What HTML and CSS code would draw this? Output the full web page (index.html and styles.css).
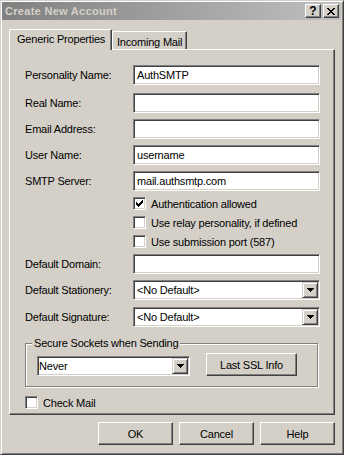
FILE: index.html
```html
<!DOCTYPE html>
<html>
<head>
<meta charset="utf-8">
<link rel="stylesheet" href="styles.css">
</head>
<body>
<div class="window">
  <div class="titlebar">
    <span class="title">Create New Account</span>
    <div class="tbtns">
      <span class="tbtn help">?</span>
      <span class="tbtn close"><svg width="8" height="7" viewBox="0 0 8 7" shape-rendering="crispEdges"><path d="M0 0h2v1h-2zM6 0h2v1h-2zM1 1h2v1h-2zM5 1h2v1h-2zM2 2h4v1h-4zM3 3h2v1h-2zM2 4h4v1h-4zM1 5h2v1h-2zM5 5h2v1h-2zM0 6h2v1h-2zM6 6h2v1h-2z" fill="#000"/></svg></span>
    </div>
  </div>
  <div class="client">
    <div class="tabs">
      <div class="tab active">Generic Properties</div>
      <div class="tab">Incoming Mail</div>
    </div>
    <div class="panel">
      <div class="form">
        <div class="row first"><span class="label">Personality Name:</span><div class="edit">AuthSMTP</div></div>
        <div class="row"><span class="label">Real Name:</span><div class="edit"></div></div>
        <div class="row"><span class="label">Email Address:</span><div class="edit"></div></div>
        <div class="row"><span class="label">User Name:</span><div class="edit">username</div></div>
        <div class="row"><span class="label">SMTP Server:</span><div class="edit">mail.authsmtp.com</div></div>
        <div class="check-row indent"><span class="cb"><svg width="11" height="11" viewBox="0 0 11 11" shape-rendering="crispEdges"><path d="M8 2h1v1h-1zM7 3h2v1h-2zM2 4h1v1h-1zM6 4h3v1h-3zM2 5h2v1h-2zM5 5h3v1h-3zM2 6h5v1h-5zM3 7h3v1h-3zM4 8h1v1h-1z" fill="#000"/></svg></span>Authentication allowed</div>
        <div class="check-row indent"><span class="cb"></span>Use relay personality, if defined</div>
        <div class="check-row indent"><span class="cb"></span>Use submission port (587)</div>
        <div class="row"><span class="label">Default Domain:</span><div class="edit"></div></div>
        <div class="row stat"><span class="label">Default Stationery:</span><div class="edit combo">&lt;No Default&gt;<span class="drop"><svg width="7" height="4" viewBox="0 0 7 4" shape-rendering="crispEdges"><path d="M0 0h7v1h-7zM1 1h5v1h-5zM2 2h3v1h-3zM3 3h1v1h-1z" fill="#000"/></svg></span></div></div>
        <div class="row"><span class="label">Default Signature:</span><div class="edit combo">&lt;No Default&gt;<span class="drop"><svg width="7" height="4" viewBox="0 0 7 4" shape-rendering="crispEdges"><path d="M0 0h7v1h-7zM1 1h5v1h-5zM2 2h3v1h-3zM3 3h1v1h-1z" fill="#000"/></svg></span></div></div>
      </div>
      <div class="group">
        <span class="group-title">Secure Sockets when Sending</span>
        <div class="group-row">
          <div class="edit combo never">Never<span class="drop"><svg width="7" height="4" viewBox="0 0 7 4" shape-rendering="crispEdges"><path d="M0 0h7v1h-7zM1 1h5v1h-5zM2 2h3v1h-3zM3 3h1v1h-1z" fill="#000"/></svg></span></div>
          <div class="btn ssl">Last SSL Info</div>
        </div>
      </div>
      <div class="check-row checkmail"><span class="cb"></span>Check Mail</div>
    </div>
    <div class="buttons">
      <div class="btn">OK</div>
      <div class="btn">Cancel</div>
      <div class="btn">Help</div>
    </div>
  </div>
</div>
</body>
</html>
```
FILE: styles.css
```css
body {
  margin: 0;
  font: 11px "Liberation Sans", Arial, sans-serif;
  letter-spacing: -0.2px;
  color: #000;
  background: #d4d0c8;
}
.window {
  width: 344px;
  height: 455px;
  box-sizing: border-box;
  border: 1px solid;
  border-color: #d4d0c8 #404040 #404040 #d4d0c8;
  box-shadow: inset 1px 1px #fff, inset -1px -1px #808080;
  padding: 1px;
  display: flex;
  flex-direction: column;
  background: #d4d0c8;
}
.titlebar {
  height: 18px;
  margin-right: 1px;
  background: linear-gradient(to right, #808080, #c0c0c0);
  display: flex;
  align-items: center;
  justify-content: space-between;
}
.title {
  font-weight: bold;
  color: #d4d0c8;
  padding-left: 3px;
  line-height: 18px;
  letter-spacing: 0.3px;
}
.tbtns {
  display: flex;
  gap: 2px;
  margin-right: 2px;
}
.tbtn {
  width: 16px;
  height: 14px;
  box-sizing: border-box;
  border: 1px solid;
  border-color: #fff #404040 #404040 #fff;
  box-shadow: inset -1px -1px #808080;
  background: #d4d0c8;
  display: flex;
  align-items: center;
  justify-content: center;
}
.help {
  font-weight: bold;
  font-size: 12px;
  line-height: 12px;
  letter-spacing: 0;
}
.client {
  flex: 1;
  padding: 9px 7px 0;
  display: flex;
  flex-direction: column;
}
.tabs {
  display: flex;
  align-items: flex-end;
  height: 20px;
}
.tab {
  box-sizing: border-box;
  height: 18px;
  width: 75px;
  border-left: 1px solid #fff;
  border-top: 1px solid #fff;
  border-right: 1px solid #404040;
  box-shadow: inset -1px 0 #808080;
  border-top-left-radius: 2px;
  border-top-right-radius: 1px;
  padding: 4px 0 0 4px;
  line-height: 13px;
  background: #d4d0c8;
}
.tab.active {
  width: 103px;
  height: 21px;
  margin-bottom: -1px;
  padding: 3px 0 0 7px;
  position: relative;
  z-index: 1;
}
.panel {
  box-sizing: border-box;
  height: 366px;
  border: 1px solid;
  border-color: #fff #404040 #404040 #fff;
  box-shadow: inset -1px -1px #808080;
  padding: 15px 0 0 15px;
  display: flex;
  flex-direction: column;
}
.form {
  display: flex;
  flex-direction: column;
  gap: 6px;
}
.row {
  display: flex;
  align-items: center;
  height: 20px;
}
.row.first { margin-bottom: 2px; }
.row.stat { margin-bottom: 1px; }
.label { width: 108px; }
.edit {
  box-sizing: border-box;
  width: 187px;
  height: 20px;
  background: #fff;
  border: 1px solid;
  border-color: #808080 #fff #fff #808080;
  box-shadow: inset 1px 1px #404040, inset -1px -1px #d4d0c8;
  padding: 1px 3px 0;
  line-height: 16px;
  white-space: nowrap;
}
.combo {
  display: flex;
  align-items: center;
  padding: 0 1px 0 3px;
}
.drop {
  margin-left: auto;
  box-sizing: border-box;
  width: 16px;
  height: 16px;
  background: #d4d0c8;
  border: 1px solid;
  border-color: #d4d0c8 #404040 #404040 #d4d0c8;
  box-shadow: inset 1px 1px #fff, inset -1px -1px #808080;
  display: flex;
  align-items: center;
  justify-content: center;
}
.check-row {
  display: flex;
  align-items: center;
  gap: 5px;
  height: 13px;
}
.check-row.indent { margin-left: 108px; }
.cb {
  box-sizing: border-box;
  width: 13px;
  height: 13px;
  background: #fff;
  border: 1px solid;
  border-color: #808080 #fff #fff #808080;
  box-shadow: inset 1px 1px #404040, inset -1px -1px #d4d0c8;
  display: flex;
}
.group {
  box-sizing: border-box;
  width: 293px;
  margin-top: 16px;
  border: 1px solid #808080;
  box-shadow: 1px 1px 0 #fff, inset 1px 1px 0 #fff;
  padding: 0 0 10px 11px;
  display: flex;
  flex-direction: column;
  align-items: flex-start;
}
.group-title {
  margin: -7px 0 0 -5px;
  padding: 0 2px;
  line-height: 13px;
  background: #d4d0c8;
}
.group-row {
  margin-top: 3px;
  display: flex;
  align-items: flex-end;
  gap: 16px;
}
.never {
  width: 153px;
  padding-left: 1px;
}
.btn {
  box-sizing: border-box;
  width: 75px;
  height: 23px;
  border: 1px solid;
  border-color: #fff #404040 #404040 #fff;
  box-shadow: inset -1px -1px #808080;
  background: #d4d0c8;
  display: flex;
  align-items: center;
  justify-content: center;
}
.btn.ssl { width: 91px; }
.checkmail { margin-top: 9px; }
.buttons {
  margin-top: 7px;
  display: flex;
  justify-content: flex-end;
  gap: 6px;
}
```
